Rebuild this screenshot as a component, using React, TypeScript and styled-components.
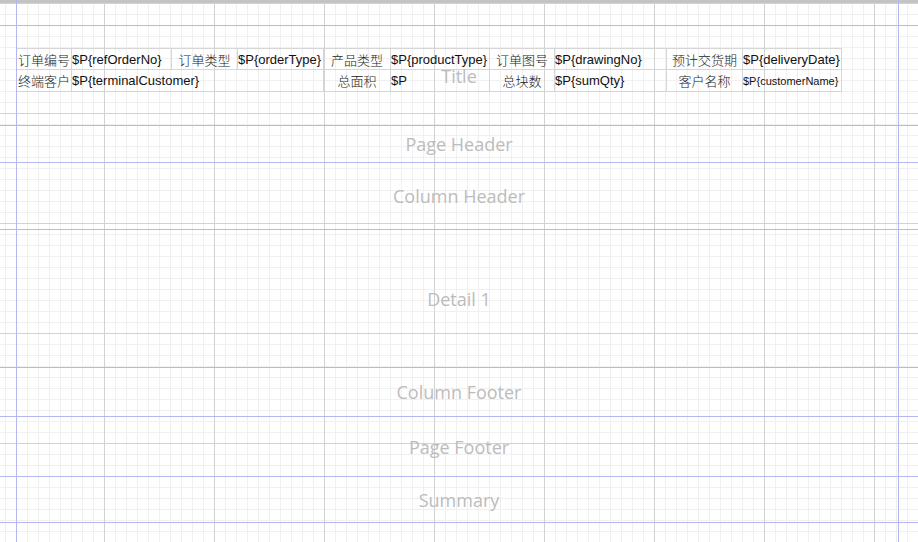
import React from "react";
import styled, { createGlobalStyle } from "styled-components";

const GlobalStyle = createGlobalStyle`
  html, body { margin: 0; padding: 0; background: #ffffff; }
  * { box-sizing: border-box; }
`;

const BAND_LINE = "#b6b6f2";

const Canvas = styled.div`
  position: relative;
  width: 918px;
  height: 542px;
  overflow: hidden;
  background-color: #ffffff;
  background-image:
    linear-gradient(to right, #d2d2d2 1px, transparent 1px),
    linear-gradient(to bottom, #d2d2d2 1px, transparent 1px),
    linear-gradient(to right, #f0f0f0 1px, transparent 1px),
    linear-gradient(to bottom, #f0f0f0 1px, transparent 1px);
  background-size: 110px 110px, 110px 110px, 11px 11px, 11px 11px;
  background-position: 104px 0, 0 3px, 5px 0, 0 3px;
  display: flex;
  flex-direction: column;
`;

const TopBar = styled.div`
  height: 3px;
  flex: none;
  background: #c4c4c4;
`;

const Band = styled.div<{ $h: number }>`
  flex: none;
  height: ${(p) => p.$h}px;
  border-bottom: 1px solid ${BAND_LINE};
  display: grid;
  grid-template-columns: 1fr;
  grid-template-rows: 1fr;
`;

const BandLabel = styled.div`
  grid-area: 1 / 1;
  display: flex;
  align-items: center;
  justify-content: center;
  font-family: "Open Sans", "Noto Sans", sans-serif;
  font-size: 18px;
  color: #bcbcbc;
  pointer-events: none;
  z-index: 1;
`;

const BandContent = styled.div`
  grid-area: 1 / 1;
  padding: 22px 0 0 16px;
`;

const FieldTable = styled.div`
  display: grid;
  width: max-content;
  grid-template-columns: 55px 100px 66px 86px 67px 99px 65px 112px 76px 99px;
  grid-template-rows: 21px 22px;
  border-top: 1px solid #d6d6d6;
  border-left: 1px solid #d6d6d6;
`;

const Cell = styled.div<{ $span?: number; $align?: "left" | "center"; $small?: boolean }>`
  grid-column: span ${(p) => p.$span ?? 1};
  border-right: 1px solid #d6d6d6;
  border-bottom: 1px solid #d6d6d6;
  display: flex;
  align-items: center;
  justify-content: ${(p) => (p.$align === "center" ? "center" : "flex-start")};
  overflow: hidden;
  white-space: nowrap;
  color: #111111;
  font-size: ${(p) => (p.$small ? 11 : 13)}px;
  font-family: "Liberation Sans", Arial, "Noto Sans CJK SC", sans-serif;
`;

const LabelCell = styled(Cell).attrs({ $align: "center" as const })`
  font-family: "Noto Sans CJK SC", "Noto Sans", sans-serif;
  font-weight: 300;
  font-size: 13px;
  color: #222222;
`;

const MarginGuides = styled.div`
  position: absolute;
  top: 0;
  bottom: 0;
  left: 16px;
  width: 883px;
  border-left: 1px solid ${BAND_LINE};
  border-right: 1px solid ${BAND_LINE};
  pointer-events: none;
  z-index: 2;
`;

export default function App() {
  return (
    <>
      <GlobalStyle />
      <Canvas>
        <TopBar />
        <Band $h={23} />
        <Band $h={100}>
          <BandContent>
            <FieldTable>
              <LabelCell>订单编号</LabelCell>
              <Cell>$P{"{"}refOrderNo{"}"}</Cell>
              <LabelCell>订单类型</LabelCell>
              <Cell>$P{"{"}orderType{"}"}</Cell>
              <LabelCell>产品类型</LabelCell>
              <Cell>$P{"{"}productType{"}"}</Cell>
              <LabelCell>订单图号</LabelCell>
              <Cell>$P{"{"}drawingNo{"}"}</Cell>
              <LabelCell>预计交货期</LabelCell>
              <Cell>$P{"{"}deliveryDate{"}"}</Cell>

              <LabelCell>终端客户</LabelCell>
              <Cell $span={3}>$P{"{"}terminalCustomer{"}"}</Cell>
              <LabelCell>总面积</LabelCell>
              <Cell>$P</Cell>
              <LabelCell>总块数</LabelCell>
              <Cell>$P{"{"}sumQty{"}"}</Cell>
              <LabelCell>客户名称</LabelCell>
              <Cell $small>$P{"{"}customerName{"}"}</Cell>
            </FieldTable>
          </BandContent>
          <BandLabel>Title</BandLabel>
        </Band>
        <Band $h={37}>
          <BandLabel>Page Header</BandLabel>
        </Band>
        <Band $h={67}>
          <BandLabel>Column Header</BandLabel>
        </Band>
        <Band $h={138}>
          <BandLabel>Detail 1</BandLabel>
        </Band>
        <Band $h={49}>
          <BandLabel>Column Footer</BandLabel>
        </Band>
        <Band $h={60}>
          <BandLabel>Page Footer</BandLabel>
        </Band>
        <Band $h={46}>
          <BandLabel>Summary</BandLabel>
        </Band>
        <MarginGuides />
      </Canvas>
    </>
  );
}
